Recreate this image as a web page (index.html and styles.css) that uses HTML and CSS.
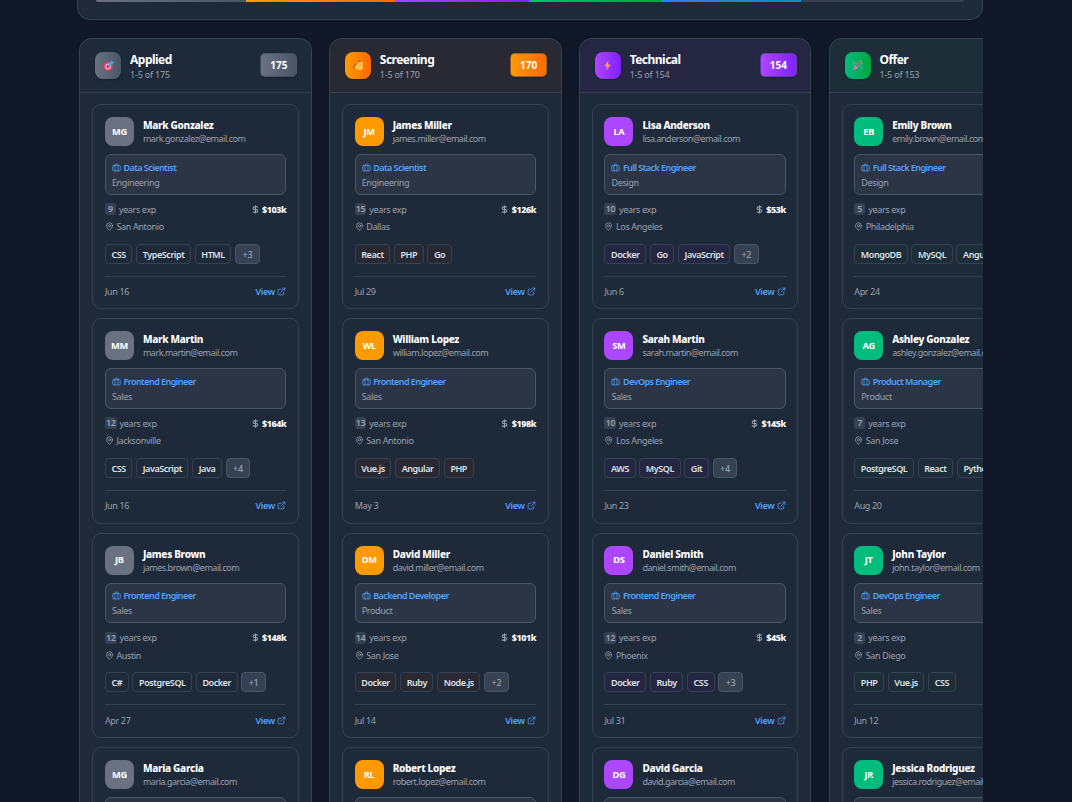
FILE: index.html
```html
<!DOCTYPE html>
<html lang="en">
<head>
<meta charset="utf-8">
<title>Candidate Pipeline</title>
<link rel="stylesheet" href="styles.css">
</head>
<body>
<svg class="defs" width="0" height="0">
  <symbol id="i-case" viewBox="0 0 24 24"><rect x="2" y="7" width="20" height="14" rx="2"/><path d="M16 21V5a2 2 0 0 0-2-2h-4a2 2 0 0 0-2 2v16"/></symbol>
  <symbol id="i-pin" viewBox="0 0 24 24"><path d="M20 10c0 6-8 12-8 12s-8-6-8-12a8 8 0 0 1 16 0Z"/><circle cx="12" cy="10" r="3"/></symbol>
  <symbol id="i-dollar" viewBox="0 0 24 24"><path d="M12 2v20M17 5H9.500a3.500 3.500 0 0 0 0 7h5a3.500 3.500 0 0 1 0 7H6"/></symbol>
  <symbol id="i-link" viewBox="0 0 24 24"><path d="M15 3h6v6M10 14 21 3M18 13v6a2 2 0 0 1-2 2H5a2 2 0 0 1-2-2V8a2 2 0 0 1 2-2h6"/></symbol>
</svg>
<main class="page">
  <section class="summary">
    <div class="bar">
      <span class="seg gray"></span><span class="seg orange"></span><span class="seg purple"></span><span class="seg green"></span><span class="seg blue"></span>
    </div>
  </section>
  <section class="board" id="board"></section>
</main>
<script src="board.js"></script>
</body>
</html>
```
FILE: styles.css
```css
* { box-sizing: border-box; }
body { margin: 0; height: 802px; overflow: hidden; background: #101828; color: #fff; font-family: "Noto Sans", "Open Sans", sans-serif; font-size: 9px; }
.defs { position: absolute; }
.page { width: 906px; margin-left: 77px; }
.summary { height: 20.400px; padding: 0 18px; background: #1e2939; border: 1px solid #364153; border-top: 0; border-radius: 0 0 13px 13px; }
.bar { display: flex; height: 2px; background: #364153; border-radius: 0 0 2px 2px; overflow: hidden; }
.seg:nth-child(1) { width: 150px; }
.seg:nth-child(2) { width: 149px; }
.seg:nth-child(3) { width: 134px; }
.seg:nth-child(4) { width: 132px; }
.seg:nth-child(5) { width: 140px; }
.gray { background: linear-gradient(90deg, #6a7282, #4a5565); }
.orange { background: linear-gradient(90deg, #fe9a00, #ff6900); }
.purple { background: linear-gradient(90deg, #ad46ff, #7f22fe); }
.green { background: linear-gradient(90deg, #00bc7d, #00a63e); }
.blue { background: linear-gradient(90deg, #2b7fff, #0092b8); }
.board { display: flex; gap: 17.400px; margin-top: 17.600px; padding-left: 2.400px; overflow: hidden; height: 764px; }
.column { flex: 0 0 232.400px; height: 764px; background: #1e2939; border: 1px solid #364153; border-bottom: 0; border-radius: 13px 13px 0 0; overflow: hidden; }
.head { display: flex; align-items: center; height: 54px; padding: 0 13.500px 0 15px; border-bottom: 1px solid #364153; }
.emblem { display: grid; place-items: center; width: 26px; height: 27px; border-radius: 8px; box-shadow: 0 1px 2px #0004; }
.emblem svg { width: 11px; height: 11px; }
.head-text { flex: 1; padding: 2px 0 0 8.700px; }
.title { font-size: 12px; font-weight: 700; line-height: 16px; letter-spacing: -.52px; }
.range { line-height: 13px; color: #99a1af; letter-spacing: -.2px; }
.count { display: grid; place-items: center; width: 37px; height: 24px; padding-bottom: 1px; border-radius: 5px; border: 1px solid #36415380; font-size: 10px; font-weight: 700; box-shadow: 0 1px 2px #0003; }
.tint-orange .head, .tint-orange .tag { background: #292934; }
.tint-purple .head, .tint-purple .tag { background: #252641; }
.tint-green .head, .tint-green .tag { background: #1d2e38; }
.cards { display: flex; flex-direction: column; gap: 9px; padding: 11.200px 12px; }
.card { flex: none; height: 205.300px; padding: 12px 11.500px; border: 1px solid #364153; border-radius: 9px; }
.person { display: flex; height: 29px; }
.avatar { display: grid; place-items: center; flex: none; width: 29px; height: 29px; padding-bottom: 1px; border-radius: 8px; font-size: 9.300px; font-weight: 700; letter-spacing: -.3px; }
.who { padding-left: 9px; white-space: nowrap; }
.name { font-size: 10px; font-weight: 800; line-height: 16px; letter-spacing: -.3px; }
.mail { line-height: 12px; color: #99a1af; letter-spacing: -.48px; }
.job { height: 40.500px; margin-top: 8px; padding: 4.500px 6px; border: 1px solid #4a5565; border-radius: 6px; background: #2b3545; letter-spacing: -.35px; }
.role { display: flex; align-items: center; gap: 2.500px; height: 15px; color: #51a2ff; font-weight: 600; letter-spacing: -.54px; }
.dept { line-height: 15px; color: #99a1af; }
svg.icon { width: 9px; height: 9px; fill: none; stroke: currentColor; stroke-width: 2; stroke-linecap: round; stroke-linejoin: round; }
.row { display: flex; align-items: center; color: #99a1af; letter-spacing: -.35px; }
.exp { height: 12px; margin-top: 8.500px; gap: 3px; }
.years { min-width: 11px; height: 12px; padding: 0 1px; line-height: 12px; text-align: center; font-weight: 600; border-radius: 3px; background: #364153; }
.pay { display: flex; align-items: center; gap: 2.500px; margin-left: auto; }
.pay .icon { stroke-width: 2.800; }
.pay b { color: #fff; font-weight: 800; letter-spacing: -.45px; }
.place { height: 14px; margin-top: 4.500px; gap: 2.500px; }
.tags { display: flex; gap: 3.700px; height: 20px; margin-top: 10px; }
.tag { padding: 0 5.600px; line-height: 19px; border: 1px solid #364153; border-radius: 4px; white-space: nowrap; color: #dfe2e7; font-weight: 600; letter-spacing: -.43px; }
.tags .more { background: #364153; border-color: #4a5565; color: #99a1af; padding: 0 6.500px; font-weight: 500; letter-spacing: -.3px; }
.foot { height: 31px; margin-top: 12px; justify-content: space-between; border-top: 1px solid #364153; }
.view { display: flex; align-items: center; gap: 2.500px; color: #51a2ff; font-weight: 600; }
.card.peek { height: 60px; padding-bottom: 0; border-bottom: 0; border-radius: 9px 9px 0 0; overflow: hidden; }
```
FILE: board.js
```js
const emblems = {
  gray: '<circle cx="5.500" cy="7" r="5" fill="#e83c64"/><circle cx="5.500" cy="7" r="3.200" fill="#efb8cb"/><circle cx="5.500" cy="7" r="1.800" fill="#dc2855"/><path d="M5.500 7 10 2.500" stroke="#4a93d9" stroke-width="1.500"/><path d="m7 4.500.5-2.500L10 .5l.5 1.500 1.500.5-1.800 2.500Z" fill="#3fa2f5"/>',
  orange: '<path d="M3.500 6 7 2l.8.6L10 1.500l.8 1L11 9l-2 2H6L2 8.500l.2-1Z" fill="#ffc54d"/><path d="m4 5 3 3M6 3.500l3 3" stroke="#de8d22" stroke-width=".6"/><path d="M.5 6.800 3 5M5.500 1.500h2.500M.5 8 2 9.500" stroke="#78695a" stroke-width="1.100"/>',
  purple: '<path d="M7 .5 2.500 6.800h3L4.800 11.500 9.500 5h-3Z" fill="#ff9a57"/>',
  green: '<path d="m2 5 5 4-6.500 3Z" fill="#b06cd0"/><path d="m2 8 2 2M3 6l3 3" stroke="#f6c244" stroke-width=".9"/><path d="M5 5c2-1 0-3 2-4M7 7c2-2 3 1 4-1" stroke="#389fe0" fill="none" stroke-width="1.600"/><path d="m6 6 4-4" stroke="#ed5472" stroke-width="1.300"/><path d="M1 2h1.500M9 1h1.500M10 9h1.500M2 4h1.500M10 4h1.500" stroke="#f6b544"/>'
};

const columns = [
  { title: 'Applied', tone: 'gray', solid: '#6a7282', count: 175, next: 'Maria Garcia', people: [
    ['Mark Gonzalez', 'Data Scientist', 'Engineering', 9, '103', 'San Antonio', 'CSS,TypeScript,HTML,+3', 'Jun 16'],
    ['Mark Martin', 'Frontend Engineer', 'Sales', 12, '164', 'Jacksonville', 'CSS,JavaScript,Java,+4', 'Jun 16'],
    ['James Brown', 'Frontend Engineer', 'Sales', 12, '148', 'Austin', 'C#,PostgreSQL,Docker,+1', 'Apr 27']] },
  { title: 'Screening', tone: 'orange', solid: '#fe9a00', count: 170, next: 'Robert Lopez', people: [
    ['James Miller', 'Data Scientist', 'Engineering', 15, '126', 'Dallas', 'React,PHP,Go', 'Jul 29'],
    ['William Lopez', 'Frontend Engineer', 'Sales', 13, '198', 'San Antonio', 'Vue.js,Angular,PHP', 'May 3'],
    ['David Miller', 'Backend Developer', 'Product', 14, '101', 'San Jose', 'Docker,Ruby,Node.js,+2', 'Jul 14']] },
  { title: 'Technical', tone: 'purple', solid: '#ad46ff', count: 154, next: 'David Garcia', people: [
    ['Lisa Anderson', 'Full Stack Engineer', 'Design', 10, '53', 'Los Angeles', 'Docker,Go,JavaScript,+2', 'Jun 6'],
    ['Sarah Martin', 'DevOps Engineer', 'Sales', 10, '145', 'Los Angeles', 'AWS,MySQL,Git,+4', 'Jun 23'],
    ['Daniel Smith', 'Frontend Engineer', 'Sales', 12, '45', 'Phoenix', 'Docker,Ruby,CSS,+3', 'Jul 31']] },
  { title: 'Offer', tone: 'green', solid: '#00bc7d', count: null, total: 153, next: 'Jessica Rodriguez', people: [
    ['Emily Brown', 'Full Stack Engineer', 'Design', 5, null, 'Philadelphia', 'MongoDB,MySQL,Angular', 'Apr 24'],
    ['Ashley Gonzalez', 'Product Manager', 'Product', 7, null, 'San Jose', 'PostgreSQL,React,Python', 'Aug 20'],
    ['John Taylor', 'DevOps Engineer', 'Sales', 2, null, 'San Diego', 'PHP,Vue.js,CSS', 'Jun 12']] }
];

const icon = id => `<svg class="icon"><use href="#i-${id}"/></svg>`;

const person = (name, solid) => {
  const initials = name.split(' ').map(w => w[0]).join('');
  const mail = name.toLowerCase().replace(' ', '.') + '@email.com';
  return `<div class="person"><div class="avatar" style="background:${solid}">${initials}</div>
    <div class="who"><div class="name">${name}</div><div class="mail">${mail}</div></div></div>`;
};

const card = (p, solid) => {
  const [name, role, dept, years, pay, place, tags, date] = p;
  return `<article class="card">${person(name, solid)}
    <div class="job"><div class="role">${icon('case')}<span>${role}</span></div><div class="dept">${dept}</div></div>
    <div class="row exp"><span class="years">${years}</span><span>years exp</span>${pay ? `<span class="pay">${icon('dollar')}<b>$${pay}k</b></span>` : ''}</div>
    <div class="row place">${icon('pin')}<span>${place}</span></div>
    <div class="tags">${tags.split(',').map(t => `<span class="tag${t[0] === '+' ? ' more' : ''}">${t}</span>`).join('')}</div>
    <div class="row foot"><span>${date}</span>${pay ? `<span class="view">View ${icon('link')}</span>` : ''}</div>
  </article>`;
};

const peek = (name, solid) => `<article class="card peek">${person(name, solid)}<div class="job"></div></article>`;

document.getElementById('board').innerHTML = columns.map(c => `<section class="column tint-${c.tone}">
  <header class="head"><div class="emblem ${c.tone}"><svg viewBox="0 0 12 12">${emblems[c.tone]}</svg></div>
    <div class="head-text"><div class="title">${c.title}</div><div class="range">1-5 of ${c.count || c.total}</div></div>
    ${c.count ? `<div class="count ${c.tone}">${c.count}</div>` : ''}</header>
  <div class="cards">${c.people.map(p => card(p, c.solid)).join('')}${peek(c.next, c.solid)}</div>
</section>`).join('');
```
